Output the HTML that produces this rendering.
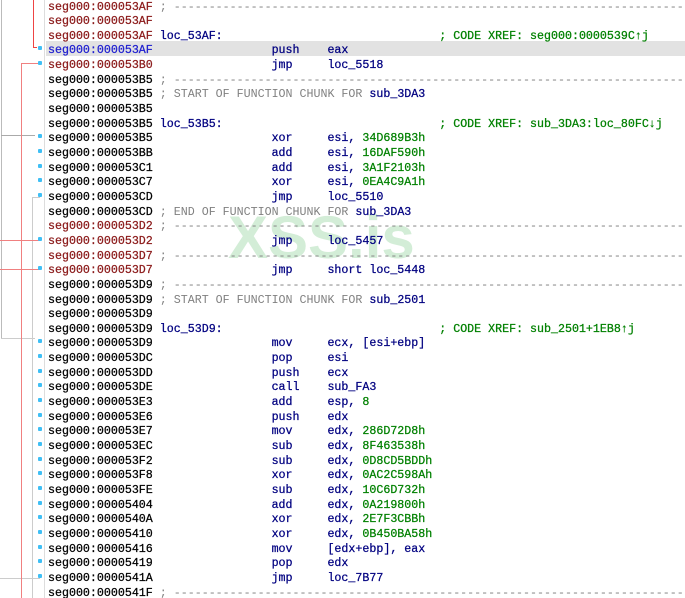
<!DOCTYPE html>
<html><head><meta charset="utf-8"><style>
html,body{margin:0;padding:0;background:#fff;width:685px;height:598px;overflow:hidden;position:relative}
.l{position:absolute;left:48px;width:637px;overflow:hidden;height:14.65px;line-height:14.65px;font-family:"Liberation Mono",monospace;font-size:11.65px;white-space:pre;color:#000;letter-spacing:0;-webkit-text-stroke:0.25px}
.r{color:#8b1a1a}.b{color:#2020d0}
.n{color:#000080}.g{color:#808080;-webkit-text-stroke:0}.x{color:#008000}.k{color:#008000}
.v{position:absolute}
.dot{position:absolute;left:38px;width:4px;height:4px;border-radius:1px;background:#3fbff5}
</style></head><body>
<div class="v" style="left:46px;top:41px;width:639px;height:15px;background:#e2e2e2"></div>
<div class="v" style="left:44px;top:0;width:1px;height:598px;background:#ddd"></div>
<div class="v" style="left:1px;top:0;width:1px;height:338px;background:#bbb"></div>
<div class="v" style="left:1px;top:135px;width:34px;height:1px;background:#aaa"></div>
<div class="v" style="left:1px;top:338px;width:34px;height:1px;background:#ccc"></div>
<div class="v" style="left:32px;top:197px;width:1px;height:401px;background:#ccc"></div>
<div class="v" style="left:32px;top:197px;width:8px;height:1px;background:#ccc"></div>
<div class="v" style="left:0;top:578px;width:40px;height:1px;background:#ccc"></div>
<div class="v" style="left:33px;top:0;width:1px;height:47px;background:#e44"></div>
<div class="v" style="left:33px;top:47px;width:4px;height:1px;background:#e44"></div>
<div class="v" style="left:21px;top:63px;width:1px;height:535px;background:#f08080"></div>
<div class="v" style="left:21px;top:63px;width:18px;height:1px;background:#f08080"></div>
<div class="v" style="left:0;top:240px;width:40px;height:1px;background:#f08080"></div>
<div class="v" style="left:0;top:269px;width:40px;height:1px;background:#f08080"></div>
<div class="v" style="left:228px;top:203px;font:bold 60px 'Liberation Sans',sans-serif;color:#a8dcb0;opacity:.5;white-space:nowrap">XSS.is</div>
<div id="c"></div>
<script>
var D='; '+'-'.repeat(80);
var L=[
['r','53AF','<span class="g">'+D+'</span>'],
['r','53AF',''],
['r','53AF','<span class="n">loc_53AF:</span>                               <span class="x">; CODE XREF: seg000:0000539C↑j</span>'],
['b','53AF','                <span class="n">push    eax</span>',1],
['r','53B0','                <span class="n">jmp     loc_5518</span>',1],
['','53B5','<span class="g">'+D+'</span>'],
['','53B5','<span class="g">; START OF FUNCTION CHUNK FOR </span><span class="n">sub_3DA3</span>'],
['','53B5',''],
['','53B5','<span class="n">loc_53B5:</span>                               <span class="x">; CODE XREF: sub_3DA3:loc_80FC↓j</span>'],
['','53B5','                <span class="n">xor     esi, </span><span class="k">34D689B3h</span>',1],
['','53BB','                <span class="n">add     esi, </span><span class="k">16DAF590h</span>',1],
['','53C1','                <span class="n">add     esi, </span><span class="k">3A1F2103h</span>',1],
['','53C7','                <span class="n">xor     esi, </span><span class="k">0EA4C9A1h</span>',1],
['','53CD','                <span class="n">jmp     loc_5510</span>',1],
['','53CD','<span class="g">; END OF FUNCTION CHUNK FOR </span><span class="n">sub_3DA3</span>'],
['r','53D2','<span class="g">'+D+'</span>'],
['r','53D2','                <span class="n">jmp     loc_5457</span>',1],
['r','53D7','<span class="g">'+D+'</span>'],
['r','53D7','                <span class="n">jmp     short loc_5448</span>',1],
['','53D9','<span class="g">'+D+'</span>'],
['','53D9','<span class="g">; START OF FUNCTION CHUNK FOR </span><span class="n">sub_2501</span>'],
['','53D9',''],
['','53D9','<span class="n">loc_53D9:</span>                               <span class="x">; CODE XREF: sub_2501+1EB8↑j</span>'],
['','53D9','                <span class="n">mov     ecx, [esi+ebp]</span>',1],
['','53DC','                <span class="n">pop     esi</span>',1],
['','53DD','                <span class="n">push    ecx</span>',1],
['','53DE','                <span class="n">call    sub_FA3</span>',1],
['','53E3','                <span class="n">add     esp, </span><span class="k">8</span>',1],
['','53E6','                <span class="n">push    edx</span>',1],
['','53E7','                <span class="n">mov     edx, </span><span class="k">286D72D8h</span>',1],
['','53EC','                <span class="n">sub     edx, </span><span class="k">8F463538h</span>',1],
['','53F2','                <span class="n">sub     edx, </span><span class="k">0D8CD5BDDh</span>',1],
['','53F8','                <span class="n">xor     edx, </span><span class="k">0AC2C598Ah</span>',1],
['','53FE','                <span class="n">sub     edx, </span><span class="k">10C6D732h</span>',1],
['','5404','                <span class="n">add     edx, </span><span class="k">0A219800h</span>',1],
['','540A','                <span class="n">xor     edx, </span><span class="k">2E7F3CBBh</span>',1],
['','5410','                <span class="n">xor     edx, </span><span class="k">0B450BA58h</span>',1],
['','5416','                <span class="n">mov     [edx+ebp], eax</span>',1],
['','5419','                <span class="n">pop     edx</span>',1],
['','541A','                <span class="n">jmp     loc_7B77</span>',1],
['','541F','<span class="g">'+D+'</span>']
];
var h='';
for(var i=0;i<L.length;i++){var t=0.5+i*14.65;var a=L[i];
h+='<div class="l" style="top:'+t.toFixed(2)+'px"><span class="'+a[0]+'">seg000:0000'+a[1]+'</span> '+a[2]+'</div>';
if(a[3])h+='<div class="dot" style="top:'+(t+2).toFixed(2)+'px"></div>';}
document.getElementById('c').innerHTML=h;
</script>
</body></html>
